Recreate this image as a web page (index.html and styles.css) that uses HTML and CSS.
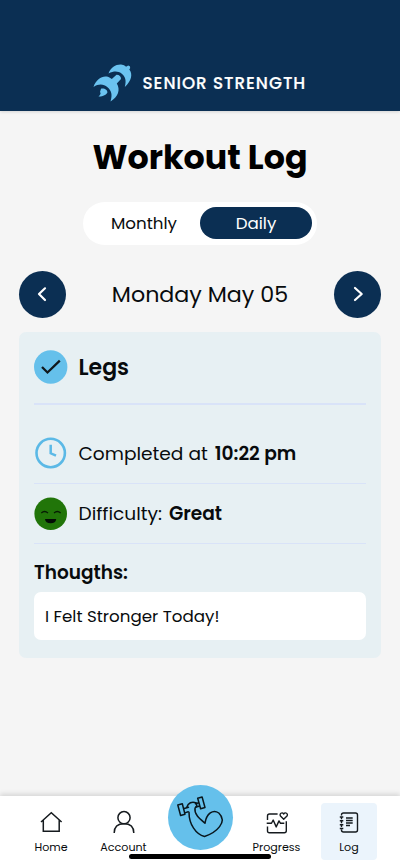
FILE: index.html
```html
<!DOCTYPE html>
<html lang="en">
<head>
<meta charset="utf-8">
<meta name="viewport" content="width=device-width, initial-scale=1">
<title>Workout Log</title>
<link rel="stylesheet" href="styles.css">
</head>
<body>
<div class="app">
  <header class="brand">
    <svg class="brand-logo" viewBox="0 0 48 44" width="48" height="44" fill="#6bc3f0">
      <path d="M18.500 13.500C21 7 26.500 4 32 4.700C34 4.900 35 5.700 36 6.700L38.200 5.400Q40.500 5.600 40.200 8L39.300 9.500C43 14 41.500 21 34.800 27C36.500 20.500 35.500 16.500 31.500 13.500C28 11 24 10.800 18.500 13.500Z"/>
      <path d="M3.500 27C6 19.500 11.500 15.900 16.500 16.500C18.500 16.800 20.500 17.800 21.800 19L26.500 14.800Q31 15 31 19L26.800 23.500C30.500 29.500 28.500 36.500 20.500 41.500C22.500 34.500 21.500 30.500 17.500 27.200C13.500 24 9 23.500 3.500 27Z"/>
      <path d="M11 28.700C14.500 28 17.700 30 17.400 32.500C16.500 34.800 12.500 36.800 8.500 36.500C10.500 34.800 11.200 33.200 10 32Z"/>
    </svg>
    <span class="brand-name">SENIOR STRENGTH</span>
  </header>

  <main class="content">
    <h1 class="title">Workout Log</h1>
    <div class="toggle">
      <button class="toggle-item monthly"><span>Monthly</span></button>
      <button class="toggle-item active"><span>Daily</span></button>
    </div>
    <div class="date-row">
      <button class="arrow" aria-label="Previous day">
        <svg viewBox="0 0 47 47" width="47" height="47"><path d="M26 17.300L20 23L26 29"/></svg>
      </button>
      <h2 class="date">Monday May 05</h2>
      <button class="arrow" aria-label="Next day">
        <svg viewBox="0 0 47 47" width="47" height="47"><path d="M21 17L27.700 23L21 29"/></svg>
      </button>
    </div>

    <section class="card">
      <div class="row heading">
        <svg class="icon" viewBox="0 0 34 34" width="34" height="34">
          <circle cx="16.700" cy="17" r="16.700" fill="#65c0eb"/>
          <path d="M8 17L13.500 22.500L25.800 10.700" fill="none" stroke="#10181c" stroke-width="2.300"/>
        </svg>
        <span class="exercise">Legs</span>
      </div>
      <div class="row completed">
        <svg class="icon" viewBox="0 0 34 34" width="34" height="34" fill="none" stroke="#5bb9e6">
          <circle cx="16.700" cy="17" r="14.200" stroke-width="2.600"/>
          <path d="M16.700 8.800V17.300L22 19.700" stroke-width="2.500"/>
        </svg>
        <span class="label done">Completed at</span><strong class="value time">10:22 pm</strong>
      </div>
      <div class="row difficulty">
        <svg class="icon" viewBox="0 0 34 34" width="34" height="34">
          <circle cx="16.700" cy="16.700" r="16.300" fill="#217509"/>
          <path d="M7.300 16Q10.500 13 14 16M20 16Q23.300 13 26.600 16" fill="none" stroke="#071b04" stroke-width="1.200"/>
          <path d="M11 22H22.200Q21.800 26.300 16.700 26.300Q11.500 26.300 11 22Z" fill="#030d05"/>
        </svg>
        <span class="label diff">Difficulty:</span><strong class="value great">Great</strong>
      </div>
      <h3 class="thoughts">Thougths:</h3>
      <div class="note"><span>I Felt Stronger Today!</span></div>
    </section>
  </main>

  <nav class="nav">
    <a class="tab home">
      <svg viewBox="0 0 24 24" width="24" height="24"><path d="M2 12L12.300 2.800L22.600 12M4.300 10.200V21.300H20.200V10.200"/></svg>
      <span>Home</span>
    </a>
    <a class="tab account">
      <svg viewBox="0 0 24 24" width="24" height="24"><circle cx="12" cy="7.700" r="6.100"/><path d="M2.200 23C2.200 16 7 13.800 12 13.800S21.800 16 21.800 23"/></svg>
      <span>Account</span>
    </a>
    <a class="workout" aria-label="Workout">
      <svg viewBox="0 0 65 65" width="65" height="65">
        <path d="M18.800 22.200C20 18.200 24 15.800 28.200 18L28.800 20.700L27 23.300C26 29.500 32 34 37 38.200C38.500 28.500 45 24 50.800 28C60 37 48.500 47.500 36.500 51.500C28 49.500 21 39.500 21 27.200"/>
        <path d="M9.800 20L14.300 18.700L17 29.200L12.600 30.500ZM29.700 13.300L34.100 12L37 22.500L32.600 23.700ZM16.200 23.500L20.500 22.200M27.500 18.700L30.600 17.800M17.500 27.600L20.200 26.800M28.200 22L31.800 21"/>
      </svg>
    </a>
    <a class="tab progress">
      <svg viewBox="0 0 24 24" width="24" height="24">
        <path class="fine" d="M2.500 10V6Q2.500 4 4.500 4H12.600M21.300 11.200V20.700Q21.300 22.700 19.300 22.700H4.500Q2.500 22.700 2.500 20.700V16.500M1.700 13.300H6.500L8.200 10L11.200 16.900L14 10.900L15.500 13.300H19.300"/>
        <path class="fine" d="M18.700 9.200L15.500 6C14 3.800 17.100 1.600 18.700 4C20.300 1.600 23.500 3.800 22 6Z"/>
      </svg>
      <span>Progress</span>
    </a>
    <a class="tab log">
      <svg viewBox="0 0 24 24" width="24" height="24">
        <path class="fine" d="M4.500 5.500V5Q4.500 3 6.500 3H18.500Q20.500 3 20.500 5V20Q20.500 22 18.500 22H6.500Q4.500 22 4.500 20V19.500M4.500 7.500V9.200M4.500 11.500V13.200M4.500 15.500V17M2.800 7H6.300M2.800 10.700H6.300M2.800 14.700H6.300M2.800 18.500H6.300M9 8H15.700M9 10.500H15.700M9 13H15.700M9 15.500H13"/>
      </svg>
      <span>Log</span>
    </a>
    <div class="home-indicator"></div>
  </nav>
</div>
</body>
</html>
```
FILE: styles.css
```css
* { box-sizing: border-box; }
body {
  margin: 0;
  background: #f5f5f5;
  color: #080b0d;
  font-family: Poppins, Inter, sans-serif;
}
button { border: 0; padding: 0; font: inherit; color: inherit; background: none; }
h1, h2, h3 { margin: 0; }
svg { display: block; flex: none; }
span, strong { white-space: nowrap; }

.app { width: 400px; height: 867px; display: flex; flex-direction: column; overflow: hidden; }

.brand {
  height: 111px;
  padding: 60px 0 0 90px;
  display: flex;
  align-items: flex-start;
  background: #0b2f53;
  box-shadow: 0 1px 3px #0002;
}
.brand-name { margin-left: 4.5px; line-height: 46px; font-size: 16.8px; font-weight: 500; letter-spacing: 0.98px; color: #fff; -webkit-text-stroke: 0.2px #fff; }

.content { flex: 1; padding: 0 19px; }
.title { margin-top: 22px; height: 48px; line-height: 50px; text-align: center; white-space: nowrap; font-size: 33.3px; font-weight: 700; color: #000; }

.toggle { width: 234px; height: 43px; margin: 21px auto 0; padding: 5px; display: flex; background: #fff; border-radius: 22px; }
.toggle-item { width: 112px; height: 32px; border-radius: 16px; font-size: 16.7px; line-height: 33px; }
.active { background: #0b2f53; color: #fff; }

.date-row { height: 47px; margin-top: 26px; display: flex; align-items: center; justify-content: space-between; }
.arrow { width: 47px; height: 47px; border-radius: 50%; background: #0b2f53; }
.arrow path { fill: none; stroke: #fff; stroke-width: 2.2; stroke-linecap: round; stroke-linejoin: round; }
.date { font-size: 22.2px; font-weight: 400; white-space: nowrap; }

.card { height: 326px; margin-top: 14px; padding: 0 15px; background: #e7f0f3; border-radius: 7px; }
.row { display: flex; align-items: center; }
.icon { margin-right: 10.5px; }
.heading { height: 73px; padding-bottom: 1px; border-bottom: 2px solid #d9e3f8; }
.exercise { font-size: 22px; font-weight: 600; }
.completed { height: 79px; padding-top: 18px; border-bottom: 1px solid #d9e3f8; }
.difficulty { height: 60px; border-bottom: 1px solid #d9e3f8; }
.label { font-size: 18.6px; }
.value { font-size: 18.6px; font-weight: 600; margin-left: 7px; }
.thoughts { height: 48px; padding-top: 17px; line-height: 24px; font-size: 18.5px; font-weight: 600; }
.note { height: 48px; padding-left: 11px; line-height: 48px; font-size: 16.7px; background: #fff; border-radius: 7px; }

.nav { position: relative; height: 71px; padding: 7px 23px 0 22px; display: flex; background: #fff; box-shadow: 0 -2px 5px #0002; }
.tab { width: 58px; height: 57px; padding-top: 7px; display: flex; flex-direction: column; align-items: center; font-size: 11.1px; line-height: 16px; border-radius: 4px; }
.tab span { margin-top: 5px; }
.tab svg, .workout svg { fill: none; stroke: #151a1e; stroke-width: 1.5; }
.tab .fine { stroke-width: 1.4; stroke-linejoin: round; }
.account { margin-left: 14.5px; }
.workout { width: 65px; height: 65px; margin: -18px 0 0 15px; border-radius: 50%; background: #65c0eb; }
.workout svg { stroke: #09171e; stroke-linejoin: round; stroke-linecap: round; }
.progress { margin-left: 15px; }
.log { width: 56px; margin-left: 15.5px; background: #ebf4fc; }
.home-indicator { position: absolute; left: 129px; top: 58px; width: 142px; height: 5px; border-radius: 3px; background: #000; }
```
